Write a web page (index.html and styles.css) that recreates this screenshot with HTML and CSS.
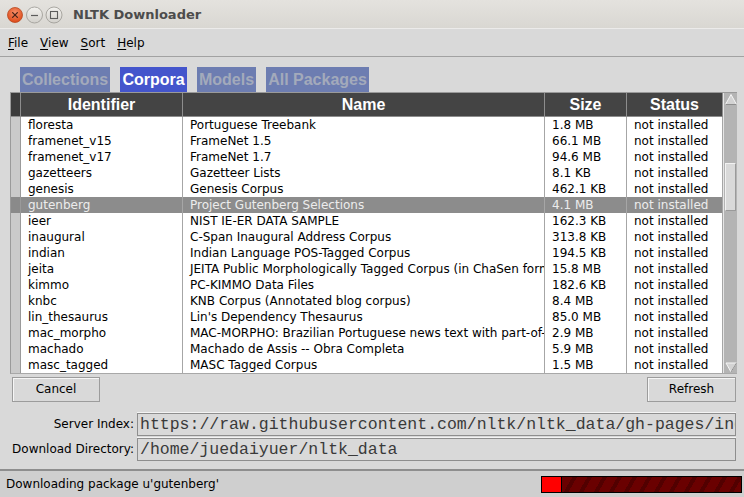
FILE: index.html
```html
<!DOCTYPE html>
<html>
<head>
<meta charset="utf-8">
<link rel="stylesheet" href="styles.css">
</head>
<body>
<div class="titlebar">
  <svg class="winctl" width="62" height="20" viewBox="0 0 62 20">
    <defs>
      <radialGradient id="cg" cx="50%" cy="35%" r="65%">
        <stop offset="0" stop-color="#f7906a"/>
        <stop offset="1" stop-color="#dd4816"/>
      </radialGradient>
      <linearGradient id="gg" x1="0" y1="0" x2="0" y2="1">
        <stop offset="0" stop-color="#f3f2ef"/>
        <stop offset="1" stop-color="#d2d0cb"/>
      </linearGradient>
    </defs>
    <circle cx="8" cy="10" r="7.5" fill="url(#cg)" stroke="#b84a22" stroke-width="0.8"/>
    <path d="M5.6 7.6 L10.4 12.4 M10.4 7.6 L5.6 12.4" stroke="#4a2418" stroke-width="1.3" stroke-linecap="round"/>
    <circle cx="27.5" cy="10" r="8" fill="url(#gg)" stroke="#a19f9a" stroke-width="0.9"/>
    <path d="M24 10.5 H31" stroke="#5c5c5c" stroke-width="1.2"/>
    <circle cx="47" cy="10" r="8" fill="url(#gg)" stroke="#a19f9a" stroke-width="0.9"/>
    <rect x="43.5" y="6.5" width="7" height="7" fill="none" stroke="#5c5c5c" stroke-width="1.1"/>
  </svg>
  <span class="title">NLTK Downloader</span>
</div>
<div class="menubar">
  <span class="menu"><u>F</u>ile</span>
  <span class="menu"><u>V</u>iew</span>
  <span class="menu"><u>S</u>ort</span>
  <span class="menu"><u>H</u>elp</span>
</div>
<div class="content">
  <div class="tabs">
    <span class="tab w1">Collections</span>
    <span class="tab active w2">Corpora</span>
    <span class="tab w3">Models</span>
    <span class="tab w4">All Packages</span>
  </div>
  <div class="table">
    <div class="grid">
      <div class="row head">
        <div class="strip"></div>
        <div class="cell">Identifier</div>
        <div class="cell">Name</div>
        <div class="cell">Size</div>
        <div class="cell">Status</div>
      </div>
      <div class="row"><div class="strip"></div><div class="cell">floresta</div><div class="cell">Portuguese Treebank</div><div class="cell">1.8 MB</div><div class="cell">not installed</div></div>
      <div class="row"><div class="strip"></div><div class="cell">framenet_v15</div><div class="cell">FrameNet 1.5</div><div class="cell">66.1 MB</div><div class="cell">not installed</div></div>
      <div class="row"><div class="strip"></div><div class="cell">framenet_v17</div><div class="cell">FrameNet 1.7</div><div class="cell">94.6 MB</div><div class="cell">not installed</div></div>
      <div class="row"><div class="strip"></div><div class="cell">gazetteers</div><div class="cell">Gazetteer Lists</div><div class="cell">8.1 KB</div><div class="cell">not installed</div></div>
      <div class="row"><div class="strip"></div><div class="cell">genesis</div><div class="cell">Genesis Corpus</div><div class="cell">462.1 KB</div><div class="cell">not installed</div></div>
      <div class="row sel"><div class="strip"></div><div class="cell">gutenberg</div><div class="cell">Project Gutenberg Selections</div><div class="cell">4.1 MB</div><div class="cell">not installed</div></div>
      <div class="row"><div class="strip"></div><div class="cell">ieer</div><div class="cell">NIST IE-ER DATA SAMPLE</div><div class="cell">162.3 KB</div><div class="cell">not installed</div></div>
      <div class="row"><div class="strip"></div><div class="cell">inaugural</div><div class="cell">C-Span Inaugural Address Corpus</div><div class="cell">313.8 KB</div><div class="cell">not installed</div></div>
      <div class="row"><div class="strip"></div><div class="cell">indian</div><div class="cell">Indian Language POS-Tagged Corpus</div><div class="cell">194.5 KB</div><div class="cell">not installed</div></div>
      <div class="row"><div class="strip"></div><div class="cell">jeita</div><div class="cell">JEITA Public Morphologically Tagged Corpus (in ChaSen format)</div><div class="cell">15.8 MB</div><div class="cell">not installed</div></div>
      <div class="row"><div class="strip"></div><div class="cell">kimmo</div><div class="cell">PC-KIMMO Data Files</div><div class="cell">182.6 KB</div><div class="cell">not installed</div></div>
      <div class="row"><div class="strip"></div><div class="cell">knbc</div><div class="cell">KNB Corpus (Annotated blog corpus)</div><div class="cell">8.4 MB</div><div class="cell">not installed</div></div>
      <div class="row"><div class="strip"></div><div class="cell">lin_thesaurus</div><div class="cell">Lin's Dependency Thesaurus</div><div class="cell">85.0 MB</div><div class="cell">not installed</div></div>
      <div class="row"><div class="strip"></div><div class="cell">mac_morpho</div><div class="cell">MAC-MORPHO: Brazilian Portuguese news text with part-of-speech tags</div><div class="cell">2.9 MB</div><div class="cell">not installed</div></div>
      <div class="row"><div class="strip"></div><div class="cell">machado</div><div class="cell">Machado de Assis -- Obra Completa</div><div class="cell">5.9 MB</div><div class="cell">not installed</div></div>
      <div class="row"><div class="strip"></div><div class="cell">masc_tagged</div><div class="cell">MASC Tagged Corpus</div><div class="cell">1.5 MB</div><div class="cell">not installed</div></div>
    </div>
    <div class="scrollbar">
      <svg class="arrow" width="14" height="13" viewBox="0 0 14 13"><path d="M7 1.5 L12.5 11.5 L1.5 11.5 Z" fill="#d3d3d3" stroke="#f6f6f6" stroke-width="1"/><path d="M12.5 11.5 L1.5 11.5" stroke="#8e8e8e" stroke-width="1"/></svg>
      <div class="track-top"></div>
      <div class="thumb"></div>
      <div class="track-bottom"></div>
      <svg class="arrow" width="14" height="11" viewBox="0 0 14 11"><path d="M2 1 L12.5 1 L7 10 Z" fill="#d3d3d3" stroke="#f6f6f6" stroke-width="1"/><path d="M12.5 1 L7 10" stroke="#8e8e8e" stroke-width="1"/></svg>
    </div>
  </div>
  <div class="buttons">
    <span class="btn cancel">Cancel</span>
    <span class="btn refresh">Refresh</span>
  </div>
  <div class="form">
    <span class="label">Server Index:</span>
    <div class="entry">https://raw.githubusercontent.com/nltk/nltk_data/gh-pages/index.xml</div>
    <span class="label">Download Directory:</span>
    <div class="entry">/home/juedaiyuer/nltk_data</div>
  </div>
</div>
<div class="statusbar">
  <span class="status">Downloading package u'gutenberg'</span>
  <div class="progress"><div class="done"></div><div class="rest"></div></div>
</div>
</body>
</html>
```

FILE: styles.css
```css
html, body {
  margin: 0;
  padding: 0;
}
body {
  width: 744px;
  height: 497px;
  overflow: hidden;
  background: #d9d9d9;
  font-family: "DejaVu Sans", sans-serif;
  font-size: 12px;
  color: #000;
  display: flex;
  flex-direction: column;
}
.titlebar {
  height: 28px;
  flex: none;
  background: linear-gradient(#e4e2de, #d9d7d2);
  display: flex;
  align-items: center;
  padding-left: 7px;
  box-sizing: border-box;
  padding-top: 1px;
}
.winctl {
  flex: none;
}
.title {
  margin-left: 4px;
  font-family: "DejaVu Sans", sans-serif;
  font-weight: bold;
  font-size: 13px;
  color: #4c4c4c;
}
.menubar {
  height: 29px;
  flex: none;
  box-sizing: border-box;
  border-top: 1px solid #ecebea;
  border-bottom: 1px solid #a2a2a2;
  display: flex;
  align-items: center;
  padding-left: 8px;
  gap: 12px;
  background: #d9d9d9;
}
.menu u {
  text-decoration: underline;
  text-underline-offset: 2px;
}
.content {
  padding-top: 10px;
  display: flex;
  flex-direction: column;
}
.tabs {
  display: flex;
  gap: 10px;
  padding-left: 20px;
  height: 25px;
}
.tab {
  height: 25px;
  line-height: 25px;
  text-align: center;
  font-family: "Liberation Sans", sans-serif;
  font-weight: bold;
  font-size: 16px;
  background: #6d7db1;
  color: #a3aabb;
}
.tab.active {
  background: #4455cc;
  color: #ffffff;
}
.w1 { width: 90px; }
.w2 { width: 67px; }
.w3 { width: 59px; }
.w4 { width: 103px; }
.table {
  margin-left: 10px;
  width: 727px;
  height: 282px;
  display: flex;
  box-sizing: border-box;
  border-top: 1px solid #9a9a9a;
  border-left: 1px solid #9a9a9a;
  border-bottom: 1px solid #a8a8a8;
}
.grid {
  width: 712px;
  background: #ffffff;
  overflow: hidden;
}
.row {
  display: grid;
  grid-template-columns: 10px 162px 362px 82px 96px;
  height: 16px;
  line-height: 15px;
}
.cell, .strip {
  box-sizing: border-box;
  border-right: 1px solid #a6a6a6;
  white-space: nowrap;
  overflow: hidden;
}
.cell {
  padding-left: 7px;
  padding-top: 1px;
}
.strip {
  background: #cacaca;
  border-right-color: #9a9a9a;
}
.row.head {
  height: 24px;
  line-height: 23px;
}
.row.head .cell, .row.head .strip {
  background: #444444;
  color: #ffffff;
  font-family: "Liberation Sans", sans-serif;
  font-weight: bold;
  font-size: 16px;
  text-align: center;
  padding-left: 0;
  padding-top: 0;
  border-right: 1px solid #8d8d8d;
  border-bottom: 1px solid #8d8d8d;
}
.row.head .strip {
  background: #3c3c3c;
}
.row.sel .cell {
  background: #8c8c8c;
  color: #ececec;
}
.row.sel .strip {
  background: #8a8a8a;
}
.scrollbar {
  width: 14px;
  background: #b4b4b4;
  display: flex;
  flex-direction: column;
  align-items: center;
  box-sizing: border-box;
  border-left: 1px solid #e6e6e6;
}
.arrow {
  flex: none;
  display: block;
}
.track-top {
  height: 57px;
  flex: none;
}
.thumb {
  width: 11px;
  height: 48px;
  flex: none;
  box-sizing: border-box;
  background: #d9d9d9;
  border-top: 1px solid #f2f2f2;
  border-left: 1px solid #f2f2f2;
  border-bottom: 1px solid #9a9a9a;
  border-right: 1px solid #9a9a9a;
}
.track-bottom {
  flex: 1;
}
.buttons {
  display: flex;
  justify-content: space-between;
  padding: 0 8px 0 12px;
  margin-top: 3px;
}
.btn {
  box-sizing: border-box;
  height: 25px;
  line-height: 23px;
  text-align: center;
  border: 1px solid #9c9c9c;
  box-shadow: inset 1px 1px 0 #f6f6f6;
  background: #d9d9d9;
}
.cancel { width: 88px; }
.refresh { width: 89px; }
.form {
  margin-top: 11px;
  display: grid;
  grid-template-columns: 134px 599px;
  column-gap: 3px;
  row-gap: 2px;
}
.label {
  text-align: right;
  line-height: 23px;
  height: 23px;
}
.entry {
  box-sizing: border-box;
  height: 23px;
  line-height: 21px;
  border: 1px solid #8e8e8e;
  box-shadow: 0 -1px 0 #f4f4f4;
  padding-left: 2px;
  font-family: "Liberation Mono", monospace;
  font-size: 16.5px;
  color: #3a3a3a;
  white-space: nowrap;
  overflow: hidden;
}
.statusbar {
  margin-top: auto;
  height: 28px;
  box-sizing: border-box;
  border-top: 2px solid #8e8e8e;
  background: #cfcfcf;
  display: flex;
  align-items: center;
  justify-content: space-between;
  padding-left: 6px;
  padding-right: 2px;
}
.progress {
  width: 201px;
  height: 17px;
  box-sizing: border-box;
  border: 1px solid #000;
  display: flex;
  margin-top: 1px;
}
.done {
  width: 19px;
  background: #ff0000;
  border-right: 1px solid #000;
}
.rest {
  flex: 1;
  background: repeating-linear-gradient(120deg, #6a0000 0px, #6a0000 9px, #520000 9px, #520000 13px);
}
```
